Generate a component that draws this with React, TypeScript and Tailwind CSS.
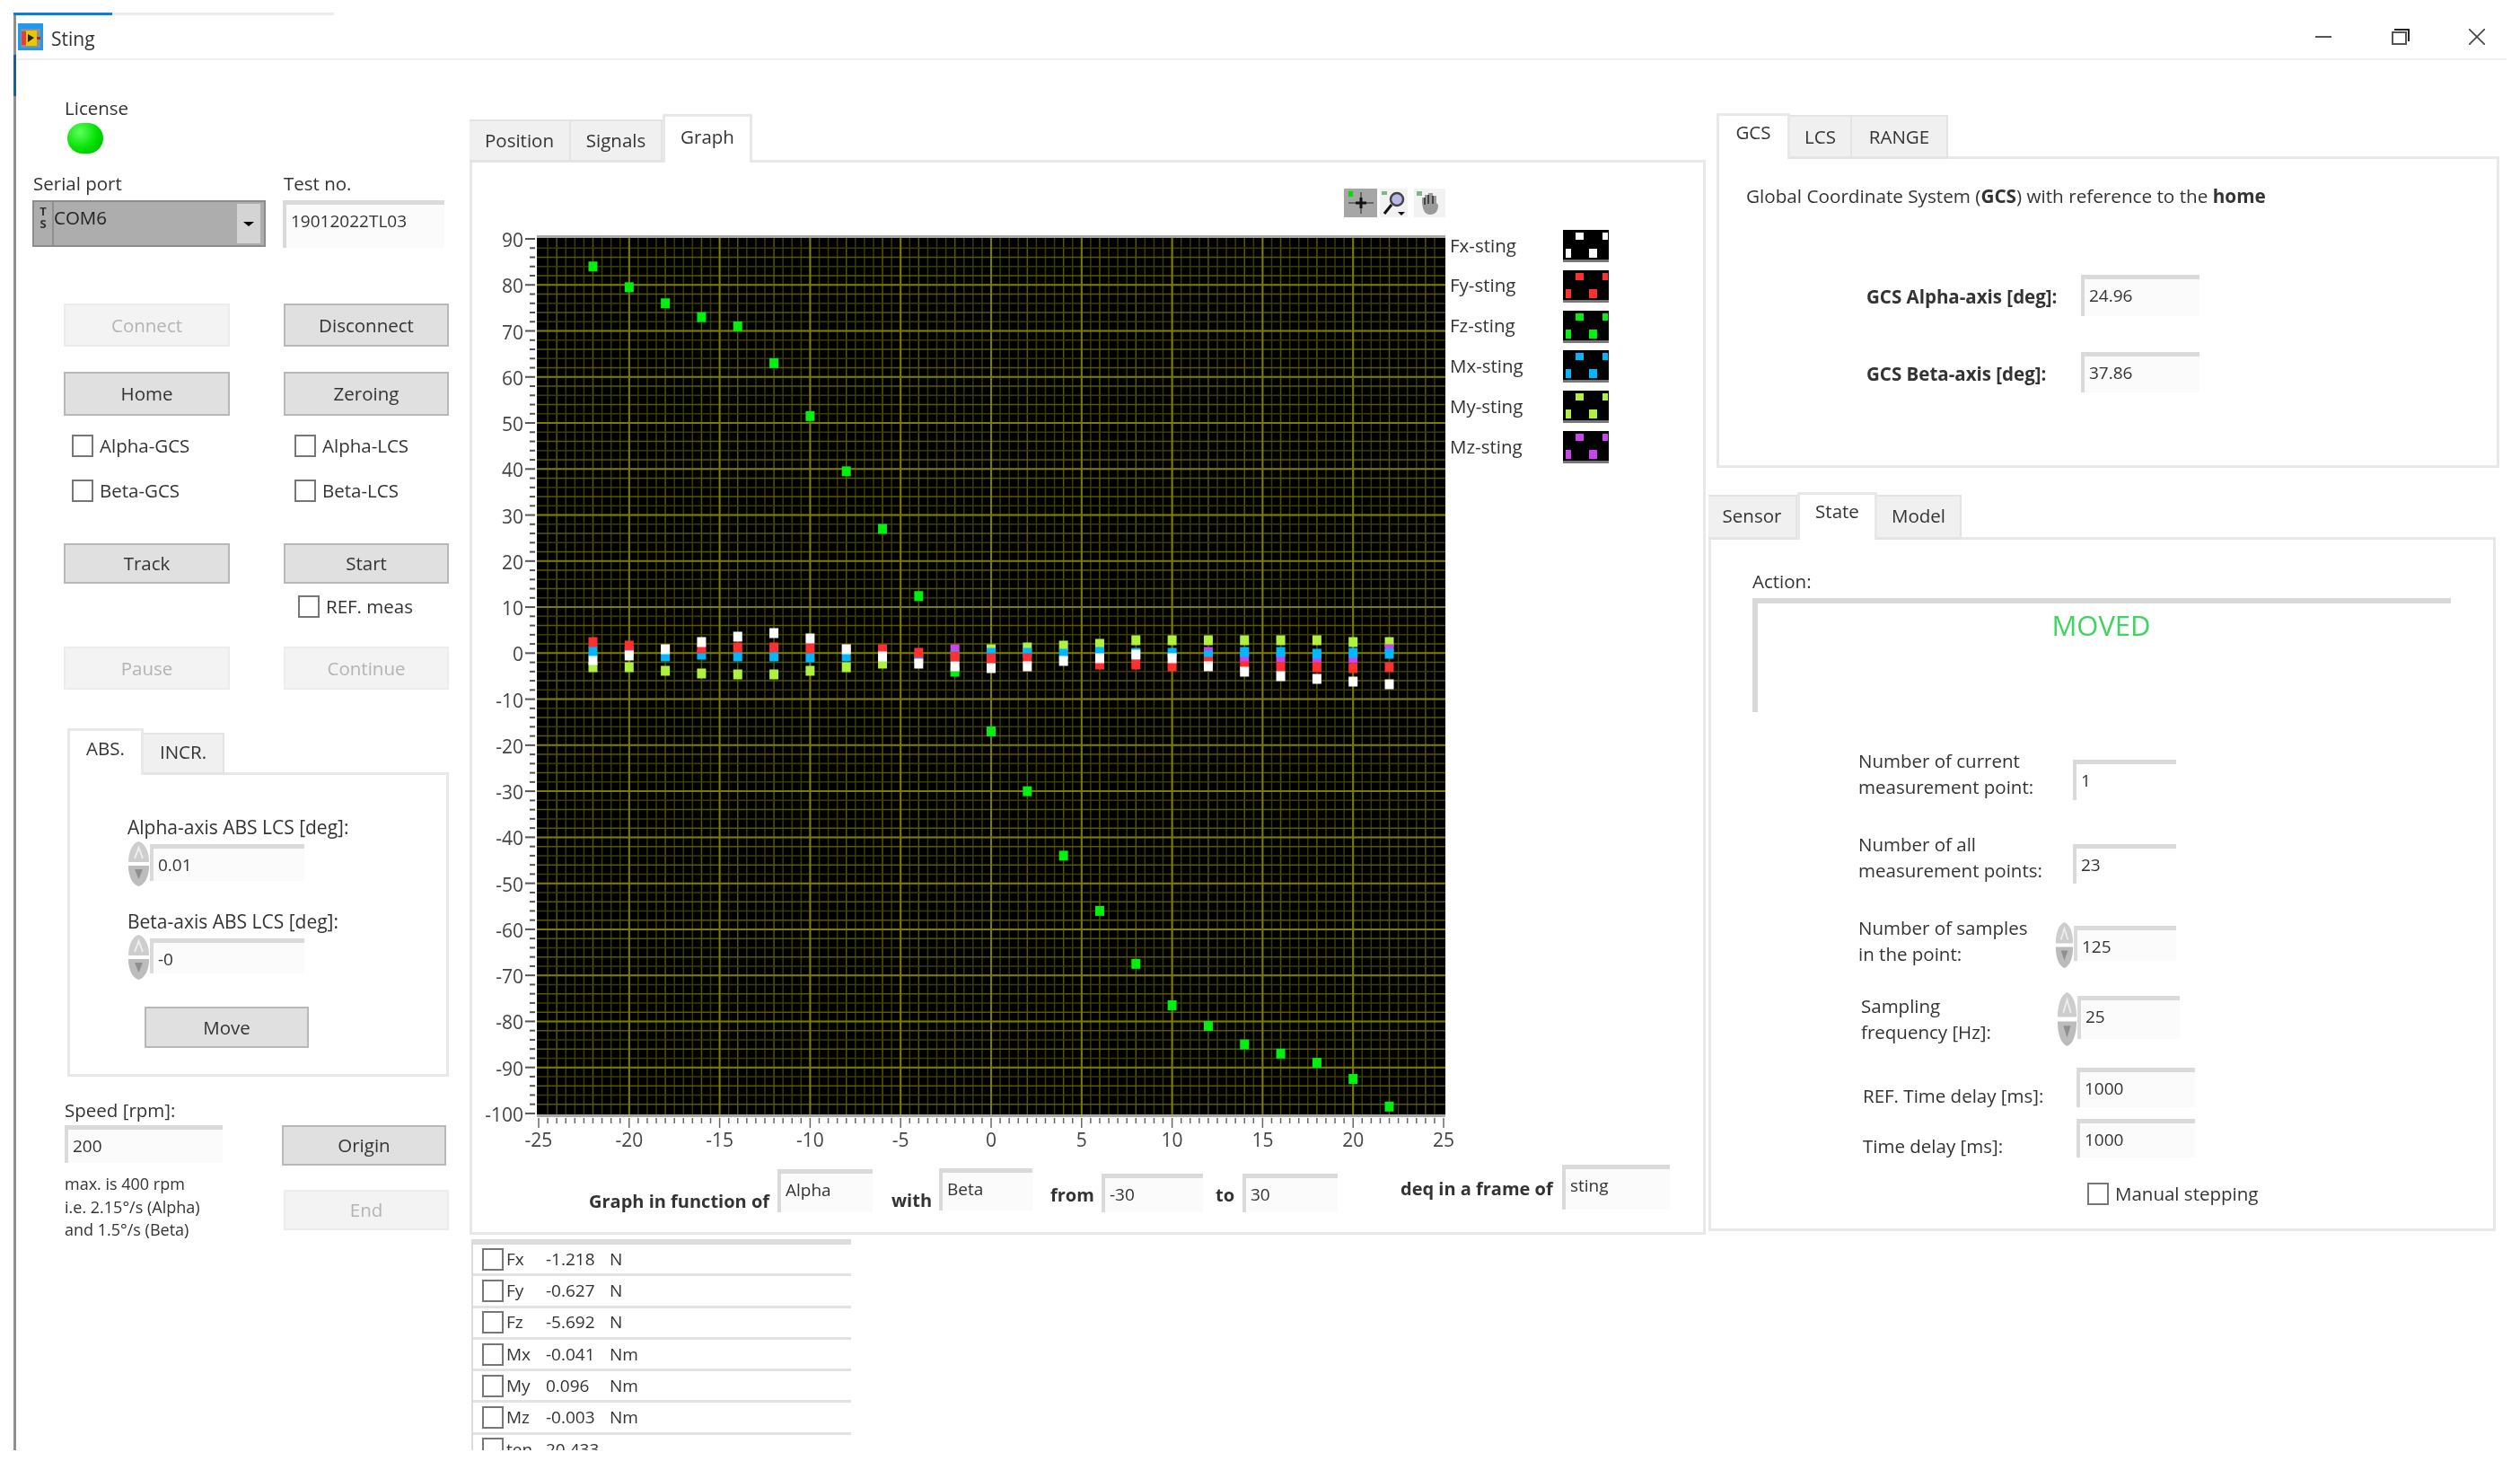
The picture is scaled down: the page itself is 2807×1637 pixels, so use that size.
import type { ReactNode } from 'react';

const W = '#ffffff';
const R = '#ff3030';
const B = '#00b8ff';
const Y = '#b0f040';
const M = '#cc44f0';
const G = '#00f010';

// plot mapping, page pixels
const px = (v: number) => 1104 + v * 20.16;
const py = (v: number) => 266 + (90 - v) * 5.126;

const fz: [number, number][] = [
  [-22, 84], [-20, 79.5], [-18, 76], [-16, 73], [-14, 71], [-12, 63], [-10, 51.5], [-8, 39.5], [-6, 27], [-4, 12.4],
  [0, -17], [2, -30], [4, -44], [6, -56], [8, -67.5], [10, -76.5], [12, -81], [14, -85], [16, -87], [18, -89], [20, -92.5], [22, -98.5],
];

// stacks near zero: colour and screen offset from y=680
const stacks: [number, [string, number][]][] = [
  [-22, [[Y, 63], [W, 55], [B, 45], [R, 35]]],
  [-20, [[Y, 63], [B, 45], [R, 39], [W, 50]]],
  [-18, [[Y, 67], [R, 43], [B, 51], [W, 43]]],
  [-16, [[Y, 70], [B, 49], [R, 42], [W, 35]]],
  [-14, [[Y, 71], [B, 51], [R, 41], [W, 29]]],
  [-12, [[Y, 71], [B, 51], [R, 41], [W, 25]]],
  [-10, [[Y, 67], [B, 52], [R, 42], [W, 31]]],
  [-8, [[Y, 63], [R, 43], [B, 51], [W, 43]]],
  [-6, [[Y, 59], [B, 50], [R, 43], [W, 51]]],
  [-4, [[B, 53], [R, 47], [W, 59]]],
  [-2, [[G, 68], [M, 43], [B, 50], [R, 51], [W, 62]]],
  [0, [[Y, 43], [B, 47], [R, 53], [W, 64]]],
  [2, [[Y, 41], [B, 47], [R, 53], [W, 62]]],
  [4, [[Y, 39], [B, 48], [W, 56]]],
  [6, [[Y, 37], [B, 46], [R, 60], [W, 53]]],
  [8, [[Y, 33], [B, 47], [R, 60], [W, 49]]],
  [10, [[Y, 33], [B, 47], [R, 62], [W, 53]]],
  [12, [[Y, 33], [M, 46], [B, 50], [R, 57], [W, 62]]],
  [14, [[Y, 33], [M, 52], [B, 46], [R, 62], [W, 68]]],
  [16, [[Y, 33], [M, 52], [B, 46], [R, 63], [W, 73]]],
  [18, [[Y, 33], [M, 53], [B, 48], [R, 63], [W, 76]]],
  [20, [[Y, 35], [M, 53], [B, 47], [R, 64], [W, 79]]],
  [22, [[Y, 35], [M, 43], [B, 48], [R, 63], [W, 82]]],
];

const range = (from: number, to: number, step: number) => {
  const out: number[] = [];
  for (let v = from; v <= to + 0.001; v += step) out.push(v);
  return out;
};

function Plot() {
  return (
    <svg viewBox="545 252 1067 1038" className="w-[1067px] h-[1038px] shrink-0 overflow-visible">
      <rect x={598} y={263} width={1012} height={979} fill="#000" />
      {range(-24.5, 24.5, 0.5).map((v, i) => (
        <line key={v} x1={px(v)} x2={px(v)} y1={265} y2={1241} stroke={i % 4 === 1 ? '#585800' : '#3c3c00'} strokeWidth={1.5} />
      ))}
      {range(-98, 88, 2).map((v, i) => (
        <line key={v} x1={598} x2={1610} y1={py(v)} y2={py(v)} stroke={i % 2 === 0 ? '#585800' : '#3c3c00'} strokeWidth={1.5} />
      ))}
      {range(-20, 20, 5).map((v) => (
        <line key={v} x1={px(v)} x2={px(v)} y1={265} y2={1241} stroke="#7c7c00" strokeWidth={2} />
      ))}
      {range(-90, 80, 10).map((v) => (
        <line key={v} x1={598} x2={1610} y1={py(v)} y2={py(v)} stroke="#7c7c00" strokeWidth={2} />
      ))}
      <rect x={598} y={262} width={1012} height={3} fill="#a8a8a8" />
      <rect x={598} y={1241} width={1012} height={3} fill="#a8a8a8" />
      {stacks.map(([x, marks]) =>
        marks.map(([c, o], i) => <rect key={`${x}-${i}`} x={px(x) - 5} y={680 + o - 5.5} width={10} height={11} fill={c} />),
      )}
      {fz.map(([x, v]) => (
        <rect key={x} x={px(x) - 5} y={py(v) - 5.5} width={10} height={11} fill={G} />
      ))}
      {range(-100, 90, 2).map((v) => (
        <line key={v} x1={v % 10 === 0 ? 585 : 590} x2={596} y1={py(v)} y2={py(v)} stroke="#555" strokeWidth={2} />
      ))}
      {range(-25, 25, 0.5).map((v) => (
        <line key={v} x1={px(v)} x2={px(v)} y1={1245} y2={v % 5 === 0 ? 1256 : 1251} stroke="#666" strokeWidth={1.5} />
      ))}
      {range(-100, 90, 10).map((v) => (
        <text key={v} x={583} y={py(v) + 9} textAnchor="end" fontSize={21} fill="#444">{v}</text>
      ))}
      {range(-25, 25, 5).map((v) => (
        <text key={v} x={px(v)} y={1277} textAnchor="middle" fontSize={21} fill="#444">{v}</text>
      ))}
    </svg>
  );
}

function Btn({ children, off, className }: { children: ReactNode; off?: boolean; className: string }) {
  return (
    <div
      className={`flex items-center justify-center border-2 ${
        off ? 'bg-[#f3f3f3] border-[#ececec] text-[#b4b4b4]' : 'bg-[#e0e0e0] border-[#b8b8b8] text-[#333]'
      } ${className}`}
    >
      {children}
    </div>
  );
}

function Field({ value, className }: { value: string; className: string }) {
  return (
    <div className={`shrink-0 bg-[#fbfbfb] border-t-[5px] border-l-[4px] border-[#dadada] pl-[5px] pt-[4px] leading-[28px] text-[19px] text-[#333] ${className}`}>
      {value}
    </div>
  );
}

function Check({ label, className = '' }: { label?: string; className?: string }) {
  return (
    <div className={`flex items-center ${className}`}>
      <div className="w-[24px] h-[25px] shrink-0 bg-white border-2 border-[#777]" />
      {label && <span className="ml-[7px] whitespace-nowrap">{label}</span>}
    </div>
  );
}

function Spinner({ className }: { className: string }) {
  return (
    <svg viewBox="0 0 25 50" preserveAspectRatio="none" className={`shrink-0 ${className}`}>
      <path d="M12.5 0 C6 2 1 10 1 23 H24 C24 10 19 2 12.5 0Z" fill="#cdcdcd" />
      <path d="M1 27 H24 C24 40 19 48 12.5 50 C6 48 1 40 1 27Z" fill="#bcbcbc" />
      <path d="M8 19 L12.5 7 L17 19" fill="none" stroke="#eeeeee" strokeWidth={2} />
      <path d="M8 31 H17 L12.5 42Z" fill="#8f8f8f" />
    </svg>
  );
}

// label, width, height, top padding
type Tab = [string, number, number, number];

function Tabs({ items, active, className = '' }: { items: Tab[]; active: number; className?: string }) {
  return (
    <div className={`relative z-10 flex items-end -mb-[3px] ${className}`}>
      {items.map(([label, w, h, pad], i) => (
        <div
          key={label}
          style={{ width: w, height: h, paddingTop: pad }}
          className={
            i === active
              ? 'flex justify-center bg-white border-x-[3px] border-t-[3px] border-[#e8e8e8]'
              : 'flex justify-center bg-[#f0f0f0] border-r-2 border-t-2 border-[#e4e4e4] border-b-[3px]'
          }
        >
          {label}
        </div>
      ))}
    </div>
  );
}

function Swatch({ color }: { color: string }) {
  return (
    <svg viewBox="0 0 51 36" className="w-[51px] h-[36px] shrink-0">
      <rect width={51} height={36} fill="#000" />
      <rect y={33} width={51} height={3} fill="#777" />
      <rect x={14} y={3} width={9} height={8} fill={color} />
      <rect x={44} y={3} width={6} height={8} fill={color} />
      <rect x={3} y={21} width={6} height={10} fill={color} />
      <rect x={29} y={21} width={9} height={10} fill={color} />
    </svg>
  );
}

const legend: [string, string][] = [
  ['Fx-sting', W], ['Fy-sting', R], ['Fz-sting', G], ['Mx-sting', B], ['My-sting', Y], ['Mz-sting', M],
];

const readings: [string, string, string][] = [
  ['Fx', '-1.218', 'N'], ['Fy', '-0.627', 'N'], ['Fz', '-5.692', 'N'], ['Mx', '-0.041', 'Nm'],
  ['My', '0.096', 'Nm'], ['Mz', '-0.003', 'Nm'], ['ten', '20.433', ''],
];

function LeftColumn() {
  return (
    <div className="w-[505px] shrink-0 flex flex-col">
      <div className="ml-[54px] mt-[41px] leading-[24px]">License</div>
      <div className="ml-[57px] mt-[5px] w-[40px] h-[34px] rounded-full bg-[radial-gradient(circle_at_35%_30%,#5dff5d,#00e000_55%,#00b000)]" />
      <div className="flex mt-[21px] leading-[24px]">
        <div className="ml-[19px] w-[279px]">Serial port</div>
        <div>Test no.</div>
      </div>
      <div className="flex mt-[7px] pl-[18px]">
        <div className="flex w-[260px] h-[52px] bg-[#adadad] border-2 border-[#8c8c8c]">
          <div className="w-[20px] flex flex-col items-center text-[13px] leading-[14px] font-bold text-[#333] pt-[3px]">
            <span>T</span>
            <span>S</span>
          </div>
          <div className="flex-1 border-l-2 border-[#8f8f8f] leading-[34px] text-[#222]">COM6</div>
          <div className="w-[26px] my-[2px] mr-[4px] bg-[#d4d4d4] flex items-center justify-center">
            <div className="w-0 h-0 border-x-[6px] border-x-transparent border-t-[5px] border-t-black" />
          </div>
        </div>
        <Field value="19012022TL03" className="ml-[19px] w-[180px] h-[53px]" />
      </div>
      <div className="flex mt-[62px] pl-[53px] gap-[60px]">
        <Btn off className="w-[185px] h-[48px]">Connect</Btn>
        <Btn className="w-[184px] h-[48px]">Disconnect</Btn>
      </div>
      <div className="flex mt-[28px] pl-[53px] gap-[60px]">
        <Btn className="w-[185px] h-[49px]">Home</Btn>
        <Btn className="w-[184px] h-[49px]">Zeroing</Btn>
      </div>
      <div className="flex mt-[20px] pl-[62px] h-[27px]">
        <Check label="Alpha-GCS" className="w-[248px]" />
        <Check label="Alpha-LCS" />
      </div>
      <div className="flex mt-[23px] pl-[62px] h-[27px]">
        <Check label="Beta-GCS" className="w-[248px]" />
        <Check label="Beta-LCS" />
      </div>
      <div className="flex mt-[45px] pl-[53px] gap-[60px]">
        <Btn className="w-[185px] h-[45px]">Track</Btn>
        <Btn className="w-[184px] h-[45px]">Start</Btn>
      </div>
      <Check label="REF. meas" className="mt-[13px] ml-[314px] h-[25px]" />
      <div className="flex mt-[32px] pl-[53px] gap-[60px]">
        <Btn off className="w-[185px] h-[48px]">Pause</Btn>
        <Btn off className="w-[184px] h-[48px]">Continue</Btn>
      </div>
      <div className="ml-[57px] mt-[43px] w-[425px]">
        <Tabs items={[['ABS.', 85, 52, 4], ['INCR.', 90, 47, 4]]} active={0} />
        <div className="h-[339px] border-[3px] border-[#e8e8e8] pt-[46px] pl-[64px]">
          <div className="leading-[24px] whitespace-nowrap text-[21px]">Alpha-axis ABS LCS [deg]:</div>
          <div className="flex items-start mt-[4px]">
            <Spinner className="w-[25px] h-[50px]" />
            <Field value="0.01" className="mt-[3px] w-[172px] h-[41px]" />
          </div>
          <div className="leading-[24px] mt-[27px] whitespace-nowrap text-[21px]">Beta-axis ABS LCS [deg]:</div>
          <div className="flex items-start mt-[3px]">
            <Spinner className="w-[25px] h-[50px]" />
            <Field value="-0" className="mt-[4px] w-[172px] h-[39px]" />
          </div>
          <Btn className="ml-[19px] mt-[30px] w-[183px] h-[46px]">Move</Btn>
        </div>
      </div>
      <div className="flex">
        <div className="ml-[54px] mt-[25px] w-[242px]">
          <div className="leading-[24px]">Speed [rpm]:</div>
          <Field value="200" className="mt-[5px] w-[176px] h-[42px]" />
          <div className="mt-[11px] text-[18px] leading-[25.5px] whitespace-nowrap">
            max. is 400 rpm
            <br />
            i.e. 2.15°/s (Alpha)
            <br />
            and 1.5°/s (Beta)
          </div>
        </div>
        <div className="mt-[54px]">
          <Btn className="w-[183px] h-[45px]">Origin</Btn>
          <Btn off className="ml-[2px] mt-[27px] w-[184px] h-[45px]">End</Btn>
        </div>
      </div>
    </div>
  );
}

function GraphToolbar() {
  return (
    <div className="flex justify-end mt-[29px] pr-[287px] h-[32px]">
      <svg viewBox="0 0 37 32" className="w-[37px] h-[32px]">
        <rect width={37} height={32} fill="#a6a6a6" />
        <rect x={5} y={3} width={5} height={6} fill="#00e000" />
        <path d="M19 4V28M5 16H33" stroke="#666" strokeWidth={2} />
        <path d="M19 10V22M13 16H25" stroke="#111" strokeWidth={3} />
      </svg>
      <svg viewBox="0 0 31 32" className="ml-[3px] w-[31px] h-[32px]">
        <rect width={31} height={32} fill="#f2f2f2" />
        <rect x={2} y={3} width={6} height={4} fill="#7fb87f" />
        <circle cx={19} cy={12} r={7} fill="#b8b8ea" stroke="#444" strokeWidth={2.5} />
        <path d="M13 18L5 28" stroke="#111" strokeWidth={3} />
        <path d="M20 26H28L24 30Z" fill="#111" />
      </svg>
      <svg viewBox="0 0 35 32" className="ml-[7px] w-[35px] h-[32px]">
        <rect width={35} height={32} fill="#f2f2f2" />
        <rect x={3} y={3} width={6} height={5} fill="#7fb87f" />
        <path d="M9 16V10H12V7H16V5H21V8H25V16L27 18C27 25 24 29 18 29C12 29 10 24 9 16Z" fill="#9a9a9a" />
        <path d="M12 10V18M16 7V17M21 8V17" stroke="#444" strokeWidth={2} />
      </svg>
    </div>
  );
}

function MiddleColumn() {
  return (
    <div className="w-[1380px] shrink-0 flex flex-col">
      <Tabs
        className="mt-[60px]"
        items={[['Position', 113, 48, 6], ['Signals', 102, 48, 6], ['Graph', 100, 54, 7]]}
        active={2}
      />
      <div className="w-[1377px] h-[1197px] border-[3px] border-[#e8e8e8]">
        <GraphToolbar />
        <div className="flex mt-[10px] pl-[19px]">
          <Plot />
          <div className="flex flex-col gap-[8.8px] mt-[4px] ml-[3px]">
            {legend.map(([label, c]) => (
              <div key={label} className="flex items-center">
                <div className="w-[126px] pb-[2px]">{label}</div>
                <Swatch color={c} />
              </div>
            ))}
          </div>
        </div>
        <div className="flex items-start mt-[7px] whitespace-nowrap">
          <div className="ml-[130px] mt-[29px] w-[204px] font-bold leading-[24px] text-[20px]">Graph in function of</div>
          <Field value="Alpha" className="ml-[6px] mt-[5px] w-[106px] h-[48px]" />
          <div className="ml-[21px] mt-[28px] w-[47px] font-bold leading-[24px] text-[20px]">with</div>
          <Field value="Beta" className="ml-[6px] mt-[4px] w-[104px] h-[47px]" />
          <div className="ml-[20px] mt-[22px] w-[50px] font-bold leading-[24px] text-[20px]">from</div>
          <Field value="-30" className="ml-[7px] mt-[10px] w-[113px] h-[43px]" />
          <div className="ml-[14px] mt-[22px] w-[21px] font-bold leading-[24px] text-[20px]">to</div>
          <Field value="30" className="ml-[9px] mt-[10px] w-[106px] h-[43px]" />
          <div className="ml-[70px] mt-[15px] w-[173px] font-bold leading-[24px] text-[20px]">deq in a frame of</div>
          <Field value="sting" className="ml-[7px] w-[120px] h-[50px]" />
        </div>
      </div>
      <div className="ml-[2px] mt-[5px] w-[423px] h-[235px] overflow-hidden border-t-[6px] border-l-2 border-[#dcdcdc] text-[19px]">
        {readings.map(([name, value, unit]) => (
          <div key={name} className="flex items-center h-[35.3px] shrink-0 border-b-[3px] border-[#e2e2e2]">
            <Check className="ml-[10px]" />
            <div className="w-[44px] ml-[3px]">{name}</div>
            <div className="w-[71px]">{value}</div>
            <div>{unit}</div>
          </div>
        ))}
      </div>
    </div>
  );
}

function InfoRow({ label, children, className, labelClass = '' }: { label: ReactNode; children: ReactNode; className: string; labelClass?: string }) {
  return (
    <div className={`flex items-start ${className}`}>
      <div className={`leading-[29px] whitespace-nowrap ${labelClass}`}>{label}</div>
      {children}
    </div>
  );
}

function RightColumn() {
  return (
    <div className="flex-1 flex flex-col">
      <Tabs className="mt-[59px] ml-[9px]" items={[['GCS', 82, 51, 3], ['LCS', 69, 49, 7], ['RANGE', 107, 49, 7]]} active={0} />
      <div className="ml-[9px] w-[872px] h-[347px] border-[3px] border-[#e8e8e8] pt-[29px] pl-[30px]">
        <div className="leading-[24px] text-[20.7px]">
          Global Coordinate System (<b>GCS</b>) with reference to the <b>home</b>
        </div>
        <div className="flex items-center mt-[76px] ml-[134px]">
          <div className="w-[239px] font-bold pt-[3px]">GCS Alpha-axis [deg]:</div>
          <Field value="24.96" className="w-[132px] h-[46px]" />
        </div>
        <div className="flex items-center mt-[40px] ml-[134px]">
          <div className="w-[239px] font-bold pt-[3px]">GCS Beta-axis [deg]:</div>
          <Field value="37.86" className="w-[132px] h-[45px]" />
        </div>
      </div>
      <Tabs className="mt-[27px]" items={[['Sensor', 99, 50, 6], ['State', 89, 53, 3], ['Model', 94, 50, 6]]} active={1} />
      <div className="w-[877px] h-[773px] border-[3px] border-[#e8e8e8] pt-[34px]">
        <div className="ml-[46px] leading-[24px]">Action:</div>
        <div className="ml-[46px] mt-[7px] w-[778px] h-[127px] border-t-[6px] border-l-[6px] border-[#d8d8d8] pt-[7px] pr-[7px] text-center text-[31px] leading-[34px] text-[#3fd45f]">
          MOVED
        </div>
        <div className="pl-[164px]">
          <InfoRow className="mt-[40px]" labelClass="w-[239px]" label={<>Number of current<br />measurement point:</>}>
            <Field value="1" className="mt-[13px] w-[115px] h-[45px] bg-white" />
          </InfoRow>
          <InfoRow className="mt-[35px]" labelClass="w-[239px]" label={<>Number of all<br />measurement points:</>}>
            <Field value="23" className="mt-[14px] w-[115px] h-[44px] bg-white" />
          </InfoRow>
          <InfoRow className="mt-[35px]" labelClass="w-[219px]" label={<>Number of samples<br />in the point:</>}>
            <Spinner className="mt-[8px] w-[21px] h-[51px]" />
            <Field value="125" className="mt-[12px] w-[114px] h-[39px]" />
          </InfoRow>
          <InfoRow className="mt-[28px] ml-[3px]" labelClass="w-[218px]" label={<>Sampling<br />frequency [Hz]:</>}>
            <Spinner className="-mt-px w-[23px] h-[60px]" />
            <Field value="25" className="mt-[3px] w-[114px] h-[48px]" />
          </InfoRow>
          <InfoRow className="mt-[24px] ml-[5px]" labelClass="w-[238px] mt-[17px]" label="REF. Time delay [ms]:">
            <Field value="1000" className="w-[132px] h-[44px]" />
          </InfoRow>
          <InfoRow className="mt-[11px] ml-[5px]" labelClass="w-[238px] mt-[16px]" label="Time delay [ms]:">
            <Field value="1000" className="w-[132px] h-[43px]" />
          </InfoRow>
          <Check label="Manual stepping" className="mt-[23px] ml-[255px]" />
        </div>
      </div>
    </div>
  );
}

export default function App() {
  return (
    <div className="w-[2807px] h-[1637px] overflow-hidden bg-white blur-[0.6px] font-['Open_Sans',sans-serif] text-[20.5px] text-[#333]">
      <div className="ml-[15px] pt-[14px]">
        <div className="w-[357px] h-[3px] bg-[#ececec]">
          <div className="w-[110px] h-[3px] bg-[#0a7fd8]" />
        </div>
      </div>
      <div className="relative ml-[15px] w-[2777px] h-[1598px] border-l-[3px] border-[#8f8f8f]">
        <div className="absolute -left-[3px] top-[44px] w-[3px] h-[46px] bg-[#1d5e94]" />
        <div className="flex items-center h-[50px] border-b-2 border-[#efefef] pl-[2px] pr-[24px]">
          <svg viewBox="0 0 28 30" className="w-[28px] h-[30px]">
            <rect width={28} height={30} fill="#1e9bf0" />
            <rect x={3} y={6} width={22} height={21} fill="#8f8f8f" />
            <rect x={4} y={9} width={5} height={15} fill="#e04040" />
            <rect x={9} y={8} width={12} height={17} fill="#e8c800" />
            <path d="M11 12L18 16L11 21Z" fill="#222" />
            <rect x={21} y={15} width={4} height={3} fill="#e01010" />
          </svg>
          <span className="ml-[9px] pt-[5px] text-[21px]">Sting</span>
          <div className="ml-auto flex items-center">
            <svg viewBox="0 0 18 18" className="w-[18px] h-[18px]"><path d="M0 9H18" stroke="#555" strokeWidth={2} /></svg>
            <svg viewBox="0 0 20 18" className="ml-[67px] w-[20px] h-[18px]">
              <rect x={1} y={4} width={15} height={13} fill="none" stroke="#555" strokeWidth={2} />
              <path d="M3 1H19V14" fill="none" stroke="#222" strokeWidth={2} />
            </svg>
            <svg viewBox="0 0 18 18" className="ml-[66px] w-[18px] h-[18px]"><path d="M0 0L18 18M18 0L0 18" stroke="#444" strokeWidth={1.6} /></svg>
          </div>
        </div>
        <div className="flex">
          <LeftColumn />
          <MiddleColumn />
          <RightColumn />
        </div>
      </div>
    </div>
  );
}
